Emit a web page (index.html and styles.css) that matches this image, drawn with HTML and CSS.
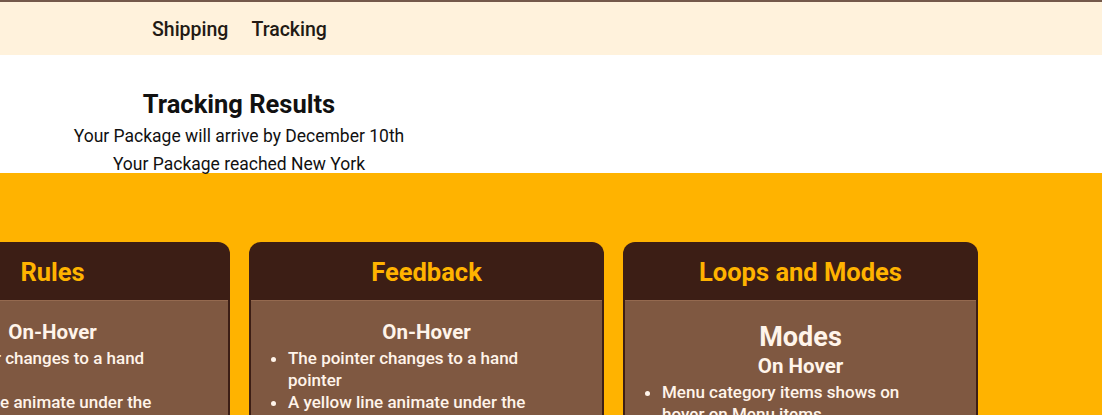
FILE: index.html
```html
<!DOCTYPE html>
<html>
<head>
<meta charset="utf-8">
<link rel="stylesheet" href="styles.css">
</head>
<body>
<div class="page">
  <header class="nav">
    <a class="nav-link" href="#">Shipping</a>
    <a class="nav-link" href="#">Tracking</a>
  </header>
  <section class="results">
    <div class="results-box">
      <h1>Tracking Results</h1>
      <p>Your Package will arrive by December 10th</p>
      <p>Your Package reached New York</p>
    </div>
  </section>
  <section class="rules">
    <div class="cards">
      <div class="card">
        <h2 class="card-title">Rules</h2>
        <div class="card-body">
          <h3 class="sub">On-Hover</h3>
          <ul>
            <li>The pointer changes to a hand pointer</li>
            <li>A yellow line animate under the menu items</li>
          </ul>
        </div>
      </div>
      <div class="card">
        <h2 class="card-title">Feedback</h2>
        <div class="card-body">
          <h3 class="sub">On-Hover</h3>
          <ul>
            <li>The pointer changes to a hand pointer</li>
            <li>A yellow line animate under the menu items</li>
          </ul>
        </div>
      </div>
      <div class="card">
        <h2 class="card-title">Loops and Modes</h2>
        <div class="card-body">
          <h3 class="big">Modes</h3>
          <h3 class="sub tight">On Hover</h3>
          <ul>
            <li>Menu category items shows on hover on Menu items</li>
          </ul>
        </div>
      </div>
    </div>
  </section>
</div>
</body>
</html>
```
FILE: styles.css
```css
html { overflow-y: scroll; }
body {
  margin: 0;
  font-family: Roboto, "Liberation Sans", sans-serif;
  color: #1a1a1a;
}
.page { overflow: hidden; }
.nav {
  border-top: 2px solid #74594b;
  background: #fff2dc;
  display: flex;
  align-items: center;
  gap: 23px;
  padding-left: 152px;
  padding-top: 2px;
  box-sizing: border-box;
  height: 55px;
}
.nav-link {
  color: #221a14;
  text-decoration: none;
  font-size: 19.5px;
  font-weight: 500;
}
.results {
  background: #fff;
  height: 118px;
}
.results-box {
  width: 478px;
  text-align: center;
  padding-top: 33px;
}
.results h1 {
  margin: 0 0 2px;
  font-size: 25.5px;
  line-height: 32px;
  font-weight: 700;
  color: #111;
}
.results p {
  margin: 0;
  font-size: 17.5px;
  line-height: 28px;
  font-weight: 400;
  color: #111;
}
.rules {
  background: #ffb300;
  padding-top: 69px;
  height: 400px;
}
.cards {
  display: flex;
  gap: 19px;
  margin-left: -125px;
}
.card {
  width: 355px;
  box-sizing: border-box;
  flex: none;
  background: #3c1e15;
  border-radius: 12px 12px 0 0;
  padding: 0 2px;
}
.card-title {
  margin: 0;
  height: 58px;
  line-height: 61px;
  text-align: center;
  color: #ffb300;
  font-size: 25.5px;
  font-weight: 700;
}
.card-body {
  background: #7f5841;
  border-top: 1px solid #94694f;
  height: 300px;
  color: #fff4ea;
  padding-top: 19px;
}
.sub {
  margin: 0;
  text-align: center;
  font-size: 20.5px;
  line-height: 25px;
  font-weight: 700;
}
.big {
  margin: 0;
  text-align: center;
  font-size: 27px;
  line-height: 34px;
  font-weight: 700;
}
.sub.tight { line-height: 25px; }
.card-body ul {
  margin: 2px 0 0;
  padding-left: 37px;
  padding-right: 54px;
  font-size: 17px;
  line-height: 22px;
  font-weight: 500;
}
```
